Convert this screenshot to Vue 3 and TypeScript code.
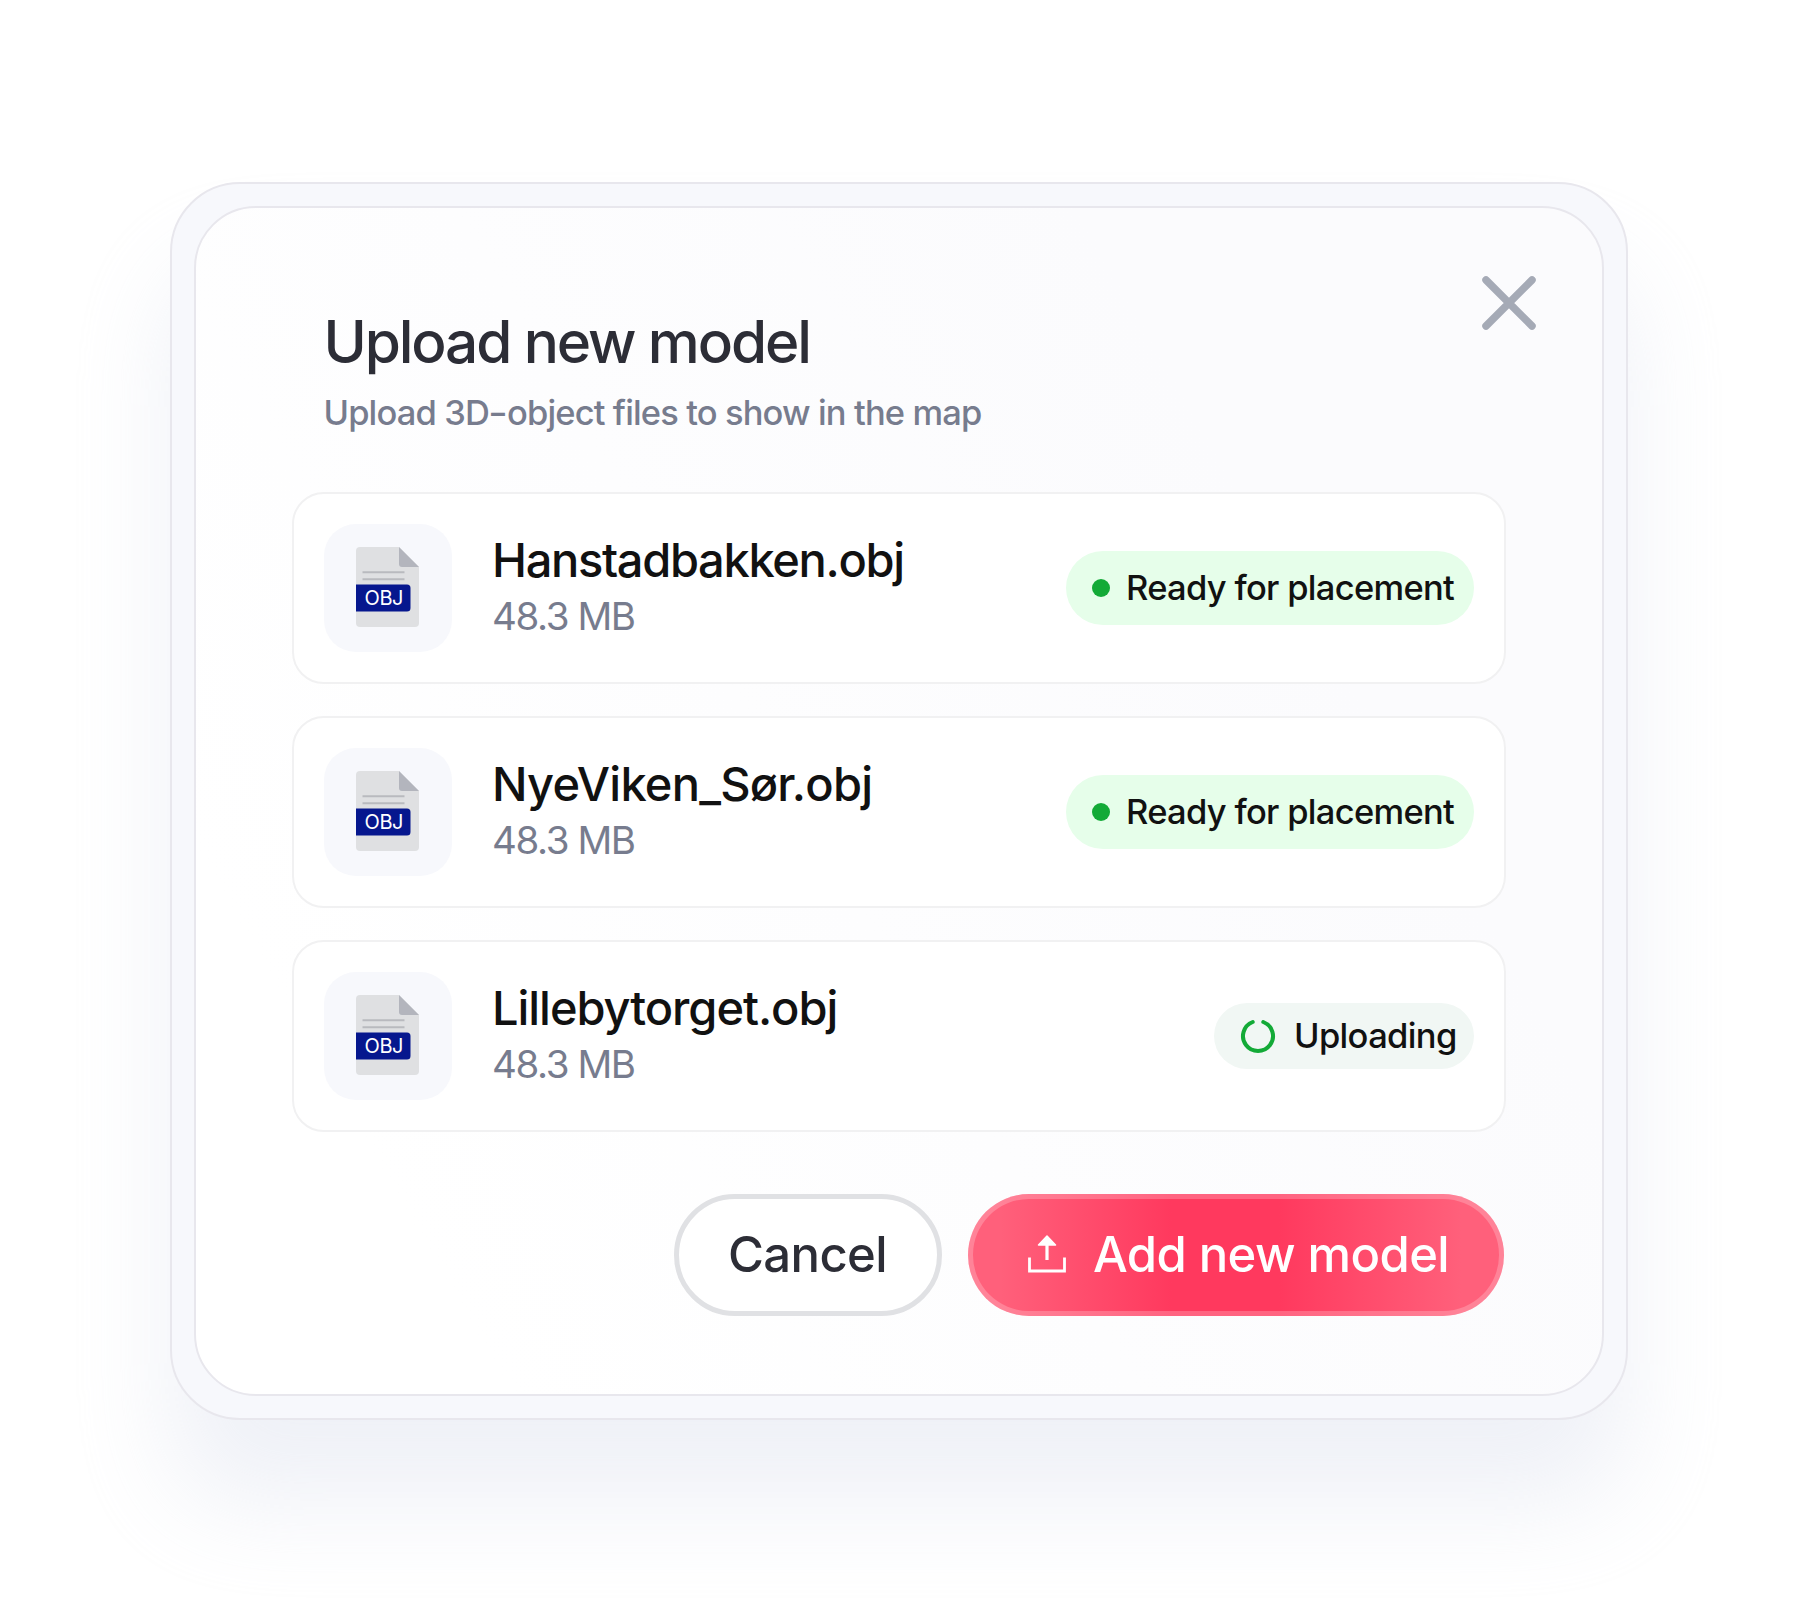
<template>
  <main class="page">
    <div class="frame">
      <section class="dialog" role="dialog" aria-labelledby="dialog-title">
        <button class="close" aria-label="Close">
          <svg viewBox="0 0 54 54" width="54" height="54">
            <path d="M4 4 50 50M50 4 4 50" />
          </svg>
        </button>

        <header class="header">
          <h1 id="dialog-title">Upload new model</h1>
          <p>Upload 3D<span class="dash">-</span>object files to show in the map</p>
        </header>

        <ul class="files">
          <li v-for="file in files" :key="file.name" class="file">
            <div class="tile">
              <svg viewBox="0 0 64 80" width="64" height="80">
                <path d="M4 0H43L63 20V76a4 4 0 0 1-4 4H4a4 4 0 0 1-4-4V4a4 4 0 0 1 4-4Z" fill="#dfe0e2" />
                <path d="M43 0 63 20H46a3 3 0 0 1-3-3Z" fill="#b3b5bd" />
                <path d="M6.500 25.300H48.500M6.500 32.300H48.500" stroke="#b9babf" stroke-width="2" />
                <path d="M0 37.500H51a3.500 3.500 0 0 1 3.500 3.500V61a3.500 3.500 0 0 1-3.500 3.500H0Z" fill="#06178e" />
                <text x="8.500" y="58.300" textLength="39">OBJ</text>
              </svg>
            </div>
            <div class="info">
              <span class="name" :style="{ letterSpacing: file.tracking + 'px' }">{{ file.name }}</span>
              <span class="size">{{ file.size }}</span>
            </div>
            <span v-if="file.status === 'ready'" class="badge ready">
              <i class="dot"></i>
              Ready for placement
            </span>
            <span v-else class="badge uploading">
              <svg class="spinner" viewBox="0 0 36 36" width="36" height="36">
                <path d="M12.700 4A15 15 0 1 0 23.300 4" />
              </svg>
              Uploading
            </span>
          </li>
        </ul>

        <footer class="actions">
          <button class="btn cancel">Cancel</button>
          <button class="btn add">
            <svg viewBox="0 0 38 38" width="38" height="38">
              <path d="M1.500 22.500V36H36.500V22.500" fill="none" stroke="#fff" stroke-width="2.800" />
              <path d="M19 10V25" stroke="#fff" stroke-width="3.200" />
              <path d="M19 1 27.500 10H10.500Z" fill="#fff" stroke="#fff" stroke-width="1.500" stroke-linejoin="round" />
            </svg>
            <span>Add new model</span>
          </button>
        </footer>
      </section>
    </div>
  </main>
</template>

<script setup lang="ts">
interface ModelFile {
  name: string
  size: string
  status: 'ready' | 'uploading'
  tracking: number
}

const files: ModelFile[] = [
  { name: 'Hanstadbakken.obj', size: '48.3 MB', status: 'ready', tracking: -1.33 },
  { name: 'NyeViken_Sør.obj', size: '48.3 MB', status: 'ready', tracking: -0.77 },
  { name: 'Lillebytorget.obj', size: '48.3 MB', status: 'uploading', tracking: -1.05 },
]
</script>

<style>
body {
  margin: 0;
  background: #fff;
}
</style>

<style scoped>
.page {
  box-sizing: border-box;
  width: 1800px;
  height: 1600px;
  padding: 182px 172px 180px 170px;
  overflow: hidden;
  font-family: Inter, "Liberation Sans", sans-serif;
}

.frame {
  box-sizing: border-box;
  height: 1238px;
  padding: 22px;
  border: 2px solid #e8e7ed;
  border-radius: 70px;
  background: #f7f8fc;
  box-shadow: 0 84px 100px rgba(228, 231, 241, 0.58);
}

.dialog {
  position: relative;
  box-sizing: border-box;
  height: 1190px;
  padding: 100px 96px 0;
  border: 2px solid #e8e7ed;
  border-radius: 62px;
  background: linear-gradient(60deg, #fff 15%, #fbfbfd 75%);
}

.close {
  position: absolute;
  top: 67.5px;
  right: 66.5px;
  padding: 0;
  border: 0;
  background: none;
}

.close svg {
  display: block;
  fill: none;
  stroke: #a5aab6;
  stroke-width: 7.5;
  stroke-linecap: round;
}

.header {
  padding-left: 31.5px;
}

.header h1 {
  margin: 0;
  font-size: 58.5px;
  line-height: 68px;
  font-weight: 500;
  letter-spacing: -2.13px;
  color: #2c2d36;
}

.header p {
  margin: 15px 0 0;
  font-size: 34.5px;
  line-height: 44px;
  font-weight: 450;
  letter-spacing: -0.88px;
  color: #777c8e;
}

.dash {
  display: inline-block;
  margin: 0 1.5px;
  transform: scaleX(1.25);
}

.files {
  display: flex;
  flex-direction: column;
  gap: 32px;
  margin: 57px 0 0;
  padding: 0;
  list-style: none;
}

.file {
  box-sizing: border-box;
  display: flex;
  align-items: center;
  height: 192px;
  padding: 0 30px;
  border: 2px solid #f1f1f2;
  border-radius: 32px;
  background: #fff;
}

.tile {
  display: flex;
  align-items: center;
  justify-content: center;
  width: 128px;
  height: 128px;
  border-radius: 32px;
  background: #f7f8fc;
}

.tile svg {
  margin-top: -3px;
}

.tile text {
  font-size: 20px;
  fill: #fff;
}

.info {
  display: flex;
  flex-direction: column;
  gap: 4px;
  margin: -4px auto 0 40px;
}

.name {
  font-size: 47px;
  line-height: 56px;
  font-weight: 500;
  color: #111;
}

.size {
  font-size: 38.5px;
  line-height: 48px;
  letter-spacing: -1.4px;
  color: #777c8e;
}

.badge {
  box-sizing: border-box;
  display: flex;
  align-items: center;
  padding-bottom: 2px;
  border-radius: 37px;
  font-size: 34.5px;
  white-space: nowrap;
  color: #111;
}

.ready {
  width: 408px;
  height: 74px;
  padding-left: 25.5px;
  background: #e6feea;
  font-weight: 450;
  letter-spacing: -0.7px;
}

.dot {
  width: 18px;
  height: 18px;
  margin: 2px 16.5px 0 0;
  border-radius: 50%;
  background: #13aa37;
}

.uploading {
  width: 260px;
  height: 66px;
  padding-left: 26px;
  background: #f1f7f4;
  font-weight: 500;
  letter-spacing: -0.65px;
}

.spinner {
  margin: 1px 18px 0 0;
  fill: none;
  stroke: #13aa37;
  stroke-width: 4;
  stroke-linecap: round;
}

.actions {
  display: flex;
  justify-content: flex-end;
  gap: 26px;
  margin: 62px 2px 0 0;
}

.btn {
  box-sizing: border-box;
  display: flex;
  align-items: center;
  height: 122px;
  padding: 0 0 1px;
  border-radius: 61px;
  font-family: inherit;
  font-size: 49px;
  font-weight: 450;
  white-space: nowrap;
}

.cancel {
  justify-content: center;
  width: 268px;
  padding-right: 1px;
  border: 5px solid #e0e1e4;
  background: #fff;
  letter-spacing: -0.6px;
  color: #2c2d36;
}

.add {
  width: 536px;
  padding-left: 59.5px;
  border: 0;
  background: linear-gradient(90deg, #ff607b 6%, #ff395e 38%, #ff395e 58%, #ff607b 92%);
  box-shadow: inset 0 0 0 5px rgba(255, 255, 255, 0.22);
  letter-spacing: -0.58px;
  color: #fff;
}

.add svg {
  margin-top: -2px;
}

.add span {
  margin-left: 27.5px;
}
</style>
